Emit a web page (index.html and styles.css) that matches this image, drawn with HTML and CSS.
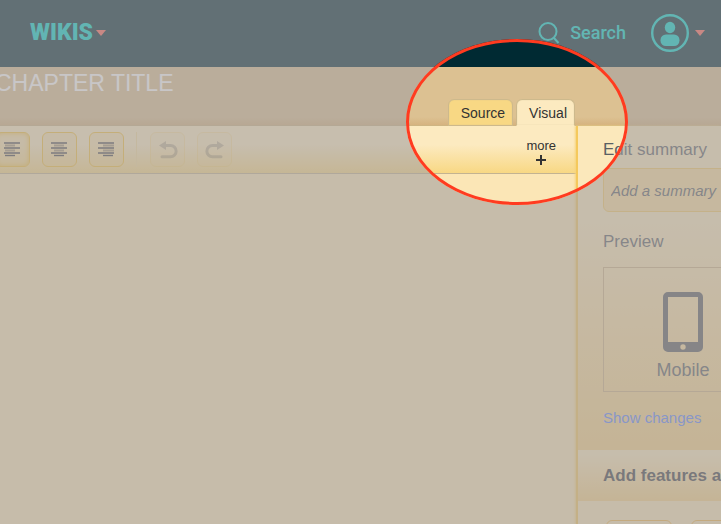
FILE: index.html
```html
<!DOCTYPE html>
<html lang="en">
<head>
<meta charset="utf-8">
<meta name="viewport" content="width=device-width, initial-scale=1">
<title>Wikis editor</title>
<link rel="stylesheet" href="styles.css">
</head>
<body>
<div class="page">
  <header class="topbar">
    <button class="brand" type="button">WIKIS
      <svg class="caret" width="10" height="6" viewBox="0 0 10 6" aria-hidden="true"><path d="M0 0h10L5 6z"/></svg>
    </button>
    <div class="tools">
      <button class="search" type="button">
        <svg width="22" height="22" viewBox="0 0 22 22" aria-hidden="true"><circle cx="10" cy="9.5" r="8.5"/><path d="M16 16L20.5 21"/></svg>
        Search
      </button>
      <button class="account" type="button" aria-label="Account">
        <svg class="avatar" width="38" height="38" viewBox="0 0 38 38" aria-hidden="true"><circle class="ring" cx="19" cy="19" r="17.8"/><ellipse cx="19" cy="13.500" rx="5.200" ry="5.800"/><rect x="9.500" y="20.500" width="19" height="11.500" rx="5.500"/></svg>
        <svg class="caret" width="10" height="6" viewBox="0 0 10 6" aria-hidden="true"><path d="M0 0h10L5 6z"/></svg>
      </button>
    </div>
  </header>

  <div class="titleband">
    <h1>CHAPTER TITLE</h1>
    <div class="tabs">
      <button class="tab" type="button">Source</button>
      <button class="tab active" type="button">Visual</button>
    </div>
  </div>

  <main class="workspace">
    <section class="editor">
      <div class="toolbar">
        <button class="tool pressed" type="button" aria-label="Align left"><svg width="17" height="15" viewBox="0 0 17 15"><path d="M0 1h16M0 6h16M0 11h16"/><path class="soft" d="M1 3.500h10M1 8.500h10"/><path d="M1 13.500h10"/></svg></button>
        <button class="tool" type="button" aria-label="Align center"><svg width="17" height="15" viewBox="0 0 17 15"><path d="M0 1h16M0 6h16M0 11h16"/><path class="soft" d="M3 3.500h10M3 8.500h10"/><path d="M3 13.500h10"/></svg></button>
        <button class="tool" type="button" aria-label="Align right"><svg width="17" height="15" viewBox="0 0 17 15"><path d="M0 1h16M0 6h16M0 11h16"/><path class="soft" d="M5 3.500h11M5 8.500h11"/><path d="M5 13.500h10"/></svg></button>
        <span class="divider"></span>
        <button class="tool" type="button" aria-label="Undo" disabled><svg class="history" width="20" height="18" viewBox="0 0 20 18"><path d="M6 4.500h6.500a5.500 5.500 0 0 1 0 11.300H4"/><path class="head" d="M8 0v9L1 4.500z"/></svg></button>
        <button class="tool" type="button" aria-label="Redo" disabled><svg class="history" width="20" height="18" viewBox="0 0 20 18"><path d="M14 4.500H7.500a5.500 5.500 0 0 0 0 11.300H16"/><path class="head" d="M12 0v9L19 4.500z"/></svg></button>
        <button class="more" type="button">more
          <svg width="10" height="10" viewBox="0 0 10 10" aria-hidden="true"><path d="M0 5h10M5 0v10"/></svg>
        </button>
      </div>
      <div class="canvas"></div>
    </section>

    <aside class="sidebar">
      <section class="summary">
        <label for="summary">Edit summary</label>
        <input id="summary" type="text" placeholder="Add a summary">
        <h2>Preview</h2>
        <button class="preview" type="button">
          <svg width="40" height="60" viewBox="0 0 40 60" aria-hidden="true"><path fill-rule="evenodd" d="M5 0h30a5 5 0 0 1 5 5v50a5 5 0 0 1-5 5H5a5 5 0 0 1-5-5V5a5 5 0 0 1 5-5zM5 5v45h30V5zM20 52.300a2.700 2.700 0 1 0 0 5.400a2.700 2.700 0 1 0 0-5.400z"/></svg>
          Mobile
        </button>
        <a href="#changes">Show changes</a>
      </section>
      <h2 class="features">Add features a</h2>
      <div class="choices">
        <button type="button" aria-label="Feature"></button>
        <button type="button" aria-label="Media"></button>
      </div>
    </aside>
  </main>
  <div class="spotlight"></div>
</div>
</body>
</html>
```

FILE: styles.css
```css
* { box-sizing: border-box; }

body {
  margin: 0;
  font-family: "Liberation Sans", Arial, sans-serif;
  color: #5a6064;
}

button {
  font: inherit;
  color: inherit;
  background: none;
  border: 0;
  padding: 0;
}

h1, h2 {
  margin: 0;
  font-size: 17px;
  font-weight: 400;
}

.page {
  position: relative;
  display: flex;
  flex-direction: column;
  min-height: 100vh;
  overflow: hidden;
  background: #fbe6b6;
}

.topbar {
  display: flex;
  align-items: center;
  justify-content: space-between;
  height: 67px;
  padding: 0 16px 2px 30px;
  background: #002a33;
  color: #00d5ce;
  font-family: Roboto, sans-serif;
}

.brand {
  display: flex;
  align-items: center;
  gap: 3px;
  font-size: 23px;
  font-weight: 900;
}

.caret { fill: #ff6458; }

.tools, .search, .account {
  display: flex;
  align-items: center;
}

.tools { gap: 25px; }
.search { gap: 10px; font-size: 18px; font-weight: 500; }
.search svg { fill: none; stroke: currentColor; stroke-width: 2; }
.account { gap: 6px; }
.avatar { fill: currentColor; }
.ring { fill: none; stroke: currentColor; stroke-width: 2.4; }

.titleband {
  display: flex;
  justify-content: space-between;
  height: 59px;
  padding-right: 146px;
  border-bottom: 1px solid #ceb583;
  background: linear-gradient(#dcc192 50px, #d6b380);
}

h1 {
  margin-left: -5px;
  font-size: 23px;
  line-height: 32px;
  color: #fff;
  white-space: nowrap;
}

.tabs {
  display: flex;
  align-items: flex-end;
  gap: 3px;
  margin-bottom: -1px;
}

.tab {
  height: 27px;
  padding: 0 7px 0 12px;
  border: 1px solid #cdb98c;
  border-radius: 6px 6px 0 0;
  background: #f8d884;
  font-size: 14px;
  color: #333;
  box-shadow: inset 0 0 1px #cdb98c;
}

.tab.active {
  border-bottom-color: #fceac0;
  background: #fceac0;
}

.workspace {
  flex: 1;
  display: grid;
  grid-template-columns: minmax(0, 1fr) 145px;
}

.toolbar {
  display: flex;
  align-items: center;
  gap: 12px;
  height: 48px;
  margin-left: -5px;
  padding-right: 20px;
  border-bottom: 1px solid #c3b391;
  background: linear-gradient(#fceac0 40%, #f8d884);
}

.tool {
  display: grid;
  place-items: center;
  width: 35px;
  height: 35px;
  border: 1px solid #f5c23c;
  border-radius: 6px;
  background: rgb(248 216 132 / 30%);
}

.pressed { box-shadow: inset 0 0 5px #f5c23c; }
.tool svg { fill: none; stroke: #44464c; stroke-width: 1.4; }
.tool .soft { stroke: #a8997a; stroke-width: 2; }
.tool:disabled { opacity: 0.25; }
.tool .history { stroke: #222; stroke-width: 3; stroke-linecap: round; }
.tool .head { fill: #222; stroke: none; }

.divider {
  width: 1px;
  height: 35px;
  margin-right: 1px;
  background: #f5dc9c;
}

.more {
  display: flex;
  flex-direction: column;
  align-items: center;
  gap: 2px;
  margin-left: auto;
  padding-top: 4px;
  font-size: 13px;
  line-height: 15px;
  color: #333;
}

.more svg { stroke: currentColor; stroke-width: 2; }

.sidebar {
  border-left: 2px solid #f5c95c;
  box-shadow: -1px 0 2px #f5d37c;
  white-space: nowrap;
}

.summary {
  display: flex;
  flex-direction: column;
  height: 324px;
  padding: 14px 0 0 25px;
  font-size: 17px;
  line-height: 20px;
  background: linear-gradient(#fbe8bb 30%, #f7d284);
}

.summary input {
  width: 240px;
  height: 44px;
  margin: 8px 0 20px;
  padding: 0 7px;
  border: 1px solid #f5ca64;
  border-radius: 6px;
  background: #f9dc9c;
  font: italic 15px "Liberation Sans", Arial, sans-serif;
}

.summary input::placeholder { color: #5a6064; opacity: 1; }

.preview {
  display: flex;
  flex-direction: column;
  align-items: center;
  gap: 8px;
  width: 160px;
  height: 125px;
  margin: 15px 0 16px;
  padding-top: 24px;
  border: 1px solid #d0b486;
  font-size: 18px;
}

.preview svg { fill: #5a5c60; }

.summary a {
  font-size: 15px;
  color: #6088ff;
  text-decoration: none;
}

.features {
  padding-left: 25px;
  font-weight: 700;
  line-height: 51px;
  color: #3c4044;
  background: linear-gradient(#fbe8bb 10%, #f7d284);
}

.choices {
  display: flex;
  gap: 19px;
  padding: 19px 0 0 28px;
  height: 23px;
  overflow: hidden;
}

.choices button {
  flex: none;
  width: 66px;
  height: 44px;
  border: 1px solid #f5ba4c;
  border-radius: 6px;
}

/* Guided-tour highlight: everything outside the ellipse is dimmed. */
.spotlight {
  position: absolute;
  top: 39px;
  right: 93px;
  width: 222px;
  height: 166px;
  border: 3px solid #ff3b20;
  border-radius: 50%;
  box-shadow: 0 0 0 2000px rgb(163 160 161 / 60%);
  pointer-events: none;
}
```
